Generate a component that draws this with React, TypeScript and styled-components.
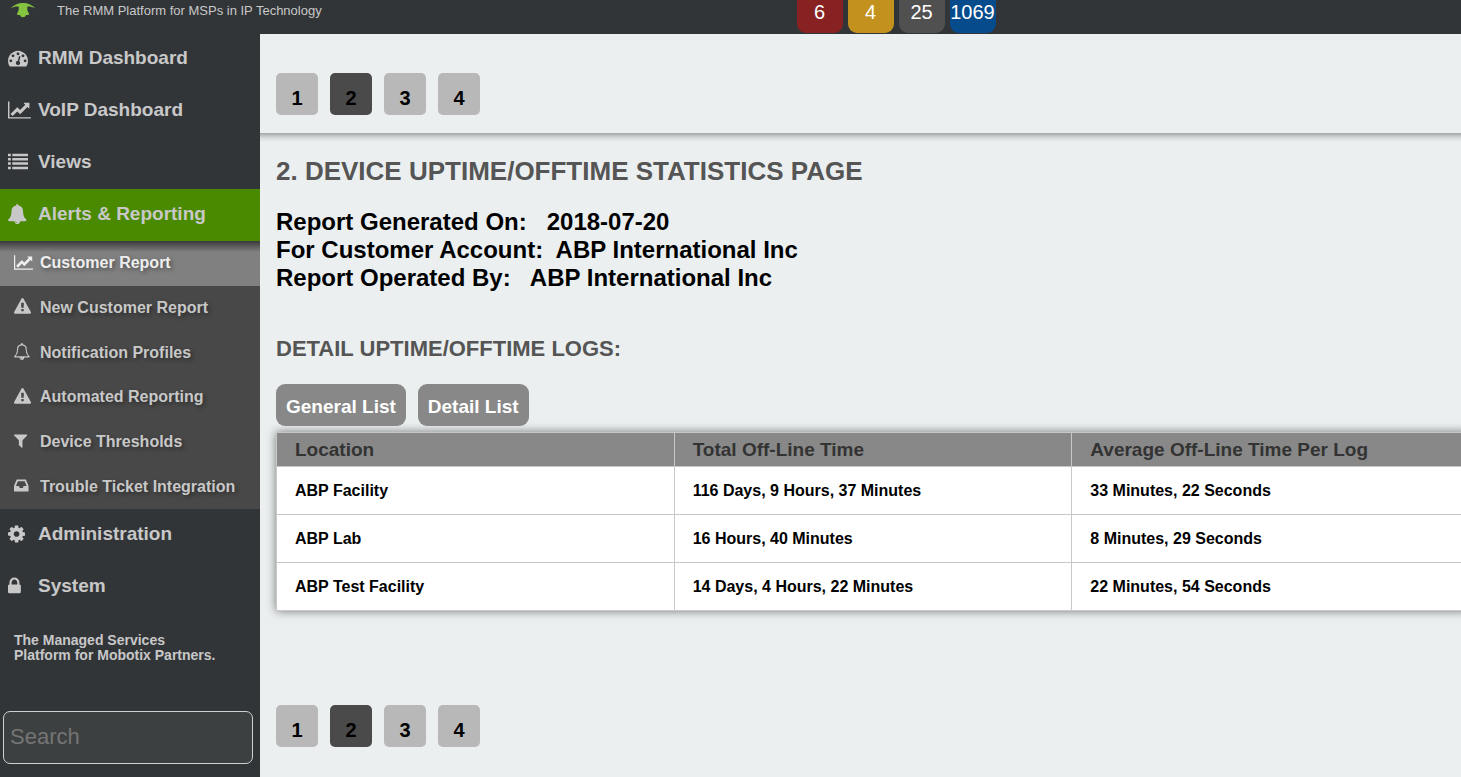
import React from 'react';
import styled, { createGlobalStyle, css } from 'styled-components';

const GlobalStyle = createGlobalStyle`
  * {
    box-sizing: border-box;
  }
  body {
    margin: 0;
    background: #ebeff0;
    font-family: 'Liberation Sans', Arial, sans-serif;
    font-weight: bold;
    color: #000;
  }
  ul {
    list-style: none;
    margin: 0;
    padding: 0;
  }
  button, input {
    font-family: inherit;
  }
`;

/* ---------- icons ---------- */

interface Glyph {
  x: number;
  w: number;
  d: string;
}

const glyphs: Record<string, Glyph> = {
  dashboard: {
    x: 0,
    w: 1792,
    d: 'M384 1152q0-53-37.5-90.5t-90.5-37.5-90.5 37.5-37.5 90.5 37.5 90.5 90.5 37.5 90.5-37.5 37.5-90.5zm192-448q0-53-37.5-90.5t-90.5-37.5-90.5 37.5-37.5 90.5 37.5 90.5 90.5 37.5 90.5-37.5 37.5-90.5zm428 481l101-382q6-26-7.5-48.5t-38.5-29.5-48 6.5-30 39.5l-101 382q-60 5-107 43.5t-63 98.5q-20 77 20 146t117 89 146-20 89-117q16-60-6-117t-72-91zm660-33q0-53-37.5-90.5t-90.5-37.5-90.5 37.5-37.5 90.5 37.5 90.5 90.5 37.5 90.5-37.5 37.5-90.5zm-640-640q0-53-37.5-90.5t-90.5-37.5-90.5 37.5-37.5 90.5 37.5 90.5 90.5 37.5 90.5-37.5 37.5-90.5zm448 192q0-53-37.5-90.5t-90.5-37.5-90.5 37.5-37.5 90.5 37.5 90.5 90.5 37.5 90.5-37.5 37.5-90.5zm320 448q0 261-141 483-19 29-54 29h-1402q-35 0-54-29-141-221-141-483 0-182 71-348t191-286 286-191 348-71 348 71 286 191 191 286 71 348z',
  },
  chart: {
    x: 0,
    w: 2048,
    d: 'M2048 1536v128h-2048v-1536h128v1408h1920zm-128-1248v435q0 21-19.5 29.5t-35.5-7.5l-121-121-633 633q-10 10-23 10t-23-10l-233-233-416 416-192-192 585-585q10-10 23-10t23 10l233 233 464-464-121-121q-16-16-7.5-35.5t29.5-19.5h435q14 0 23 9t9 23z',
  },
  list: {
    x: 0,
    w: 1792,
    d: 'M0 160h256v224h-256zM384 160h1408v224h-1408zM0 544h256v224h-256zM384 544h1408v224h-1408zM0 928h256v224h-256zM384 928h1408v224h-1408zM0 1312h256v224h-256zM384 1312h1408v224h-1408z',
  },
  bell: {
    x: 64,
    w: 1664,
    d: 'M912 1696q0-16-16-16-59 0-101.500-42.500t-42.500-101.500q0-16-16-16t-16 16q0 73 51.500 124.500t124.500 51.500q16 0 16-16zm816-288q0 52-38 90t-90 38h-448q0 106-75 181t-181 75-181-75-75-181h-448q-52 0-90-38t-38-90q50-42 91-88t85-119.500 74.500-158.500 50-206 19.500-260q0-152 117-282.500t307-158.500q-8-19-8-39 0-40 28-68t68-28 68 28 28 68q0 20-8 39 190 28 307 158.500t117 282.500q0 139 19.500 260t50 206 74.500 158.500 85 119.500 91 88z',
  },
  bellOutline: {
    x: 64,
    w: 1664,
    d: 'M912 1696q0-16-16-16-59 0-101.500-42.500t-42.500-101.500q0-16-16-16t-16 16q0 73 51.500 124.500t124.500 51.500q16 0 16-16zm-666-288h1300q-266-300-266-832 0-51-24-105t-69-103-121.500-80.500-169.500-31.500-169.500 31.500-121.500 80.500-69 103-24 105q0 532-266 832zm1482 0q0 52-38 90t-90 38h-448q0 106-75 181t-181 75-181-75-75-181h-448q-52 0-90-38t-38-90q50-42 91-88t85-119.500 74.500-158.500 50-206 19.500-260q0-152 117-282.500t307-158.500q-8-19-8-39 0-40 28-68t68-28 68 28 28 68q0 20-8 39 190 28 307 158.500t117 282.500q0 139 19.500 260t50 206 74.500 158.500 85 119.500 91 88z',
  },
  warning: {
    x: 0,
    w: 1792,
    d: 'M1024 1375v-190q0-14-9.500-23.500t-22.500-9.500h-192q-13 0-22.500 9.500t-9.500 23.500v190q0 14 9.500 23.500t22.500 9.500h192q13 0 22.500-9.500t9.500-23.500zm-2-374l18-459q0-12-10-19-13-11-24-11h-220q-11 0-24 11-10 7-10 21l17 457q0 10 10 16.500t24 6.500h185q14 0 23.500-6.500t10.500-16.500zm-14-934l768 1408q35 63-2 126-17 29-46.500 46t-63.500 17h-1536q-34 0-63.500-17t-46.500-46q-37-63-2-126l768-1408q17-31 47-49t65-18 65 18 47 49z',
  },
  filter: {
    x: 192,
    w: 1408,
    d: 'M1595 295q17 41-14 70l-493 493v742q0 42-39 59-13 5-25 5-27 0-45-19l-256-256q-19-19-19-45v-486l-493-493q-31-29-14-70 17-39 59-39h1280q42 0 59 39z',
  },
  inbox: {
    x: 128,
    w: 1536,
    d: 'M1151 960h316q-1-3-2.500-8.500t-2.500-7.500l-212-496h-708l-212 496q-1 3-2.500 8.500t-2.500 7.500h316l95 192h320zm513 30v482q0 26-19 45t-45 19h-1408q-26 0-45-19t-19-45v-482q0-62 25-123l238-552q10-25 36.500-42t52.500-17h832q26 0 52.500 17t36.500 42l238 552q25 61 25 123z',
  },
  cog: {
    x: 128,
    w: 1536,
    d: 'M1152 896q0-106-75-181t-181-75-181 75-75 181 75 181 181 75 181-75 75-181zm512-109v222q0 12-8 23t-20 13l-185 28q-19 54-39 91 35 50 107 138 10 12 10 25t-9 23q-27 37-99 108t-94 71q-12 0-26-9l-138-108q-44 23-91 38-16 136-29 186-7 28-36 28h-222q-14 0-24.500-8.500t-11.500-21.500l-28-184q-49-16-90-37l-141 107q-10 9-25 9-14 0-25-11-126-114-165-168-7-10-7-23 0-12 8-23 15-21 51-66.500t54-70.500q-27-50-41-99l-183-27q-13-2-21-12.500t-8-23.500v-222q0-12 8-23t19-13l186-28q14-46 39-92-40-57-107-138-10-12-10-24 0-10 9-23 26-36 98.500-107.500t94.500-71.500q13 0 26 10l138 107q44-23 91-38 16-136 29-186 7-28 36-28h222q14 0 24.500 8.500t11.500 21.500l28 184q49 16 90 37l142-107q9-9 24-9 13 0 25 10 129 119 165 170 7 8 7 22 0 12-8 23-15 21-51 66.500t-54 70.500q26 50 41 98l183 28q13 2 21 12.500t8 23.500z',
  },
  lock: {
    x: 320,
    w: 1152,
    d: 'M640 768h512v-192q0-106-75-181t-181-75-181 75-75 181v192zm832 96v576q0 40-28 68t-68 28h-960q-40 0-68-28t-28-68v-576q0-40 28-68t68-28h32v-192q0-184 132-316t316-132 316 132 132 316v192h32q40 0 68 28t28 68z',
  },
};

const IconSlot = styled.span<{ $width: number }>`
  flex: 0 0 ${(p) => p.$width}px;
  display: flex;

  svg {
    display: block;
    fill: currentColor;
  }
`;

function Icon({ name, size, slot }: { name: string; size: number; slot: number }) {
  const g = glyphs[name];
  return (
    <IconSlot $width={slot} aria-hidden="true">
      <svg height={size} width={(g.w / 1792) * size} viewBox={`${g.x} 0 ${g.w} 1792`}>
        <path d={g.d} />
      </svg>
    </IconSlot>
  );
}

/* ---------- header ---------- */

const Page = styled.div`
  min-height: 100vh;
  display: flex;
  flex-direction: column;
  overflow-x: clip;
`;

const Header = styled.header`
  display: flex;
  height: 33px;
  background: #323538;
`;

const Brand = styled.div`
  flex: 0 0 calc(50% + 67px);
  display: flex;
  padding-left: 10px;
  color: #c8c8c8;
`;

const Logo = styled.svg`
  flex: none;
  width: 26px;
  height: 20px;
  margin-right: 21px;
`;

const Tagline = styled.span`
  font-size: 13px;
  font-weight: normal;
  line-height: 21px;
`;

const Badges = styled.div`
  display: flex;
  gap: 5px;
  margin-left: -1px;
`;

const Badge = styled.a<{ $color: string }>`
  display: flex;
  justify-content: center;
  width: 46px;
  height: 33px;
  border-radius: 0 0 9px 9px;
  background: ${(p) => p.$color};
  color: #fff;
  font-size: 20px;
  font-weight: normal;
  line-height: 24px;
  text-decoration: none;
`;

/* ---------- sidebar ---------- */

const Body = styled.div`
  flex: 1;
  display: flex;
`;

const Sidebar = styled.aside`
  flex: 0 0 260px;
  background: #323538;
  color: #c8c8c8;
`;

const NavLink = styled.a<{ $active?: boolean }>`
  display: flex;
  align-items: center;
  height: 52px;
  padding: 0 0 2px 8px;
  background: ${(p) => (p.$active ? '#4a8a00' : 'transparent')};
  color: #c8c8c8;
  font-size: 19px;
  line-height: 24px;
  text-decoration: none;
`;

const SubMenu = styled.ul`
  display: grid;
  grid-auto-rows: 1fr;
  height: 268px;
  background: #484848;
`;

const SubLink = styled.a<{ $active?: boolean }>`
  display: flex;
  align-items: center;
  height: 100%;
  padding-left: 14px;
  color: #c8c8c8;
  font-size: 16px;
  line-height: 20px;
  text-decoration: none;
  text-shadow: 2px 2px 4px rgba(0, 0, 0, 0.4);

  ${IconSlot} {
    padding-bottom: 2px;
  }

  ${(p) =>
    p.$active &&
    css`
      background: linear-gradient(rgba(0, 0, 0, 0.55), transparent 11px), #808080;
      color: #eee;
    `}
`;

const Note = styled.p`
  margin: 20px 14px 48px;
  font-size: 14px;
  line-height: 15px;
`;

const SearchBox = styled.input`
  display: block;
  width: 250px;
  height: 53px;
  margin-left: 3px;
  padding: 0 6px 2px;
  border: 1px solid #d0d0d0;
  border-radius: 7px;
  background: #3d4040;
  color: #c8c8c8;
  font-size: 22px;

  &::placeholder {
    color: #757575;
  }
`;

/* ---------- report ---------- */

const Main = styled.main`
  flex: 1;
  min-width: 0;
  border-top: 1px solid #323538;
`;

const Pager = styled.nav`
  display: flex;
  gap: 12px;
  padding: 39px 16px 18px;
`;

const PageButton = styled.button<{ $active?: boolean }>`
  width: 42px;
  height: 42px;
  padding: 7px 0 0;
  border: 0;
  border-radius: 5px;
  background: ${(p) => (p.$active ? '#4a4a4a' : '#b8b8b8')};
  color: #000;
  font-size: 20px;
  font-weight: bold;
  line-height: 24px;
`;

const Report = styled.section`
  padding: 22px 0 55px 16px;
  background: linear-gradient(rgba(0, 0, 0, 0.3), rgba(0, 0, 0, 0.08) 5px, transparent 9px);
`;

const Title = styled.h1`
  margin: 0 0 21px;
  color: #555;
  font-size: 26px;
  line-height: 32px;
`;

const Facts = styled.p`
  margin: 0 0 43px;
  font-size: 24px;
  line-height: 28px;
  white-space: pre-wrap;
`;

const SubTitle = styled.h2`
  margin: 0 0 21px;
  color: #555;
  font-size: 22px;
  line-height: 28px;
`;

const ListButtons = styled.div`
  display: flex;
  gap: 12px;
  margin-bottom: 6px;
`;

const ListButton = styled.button`
  height: 42px;
  padding: 4px 10px 0;
  border: 0;
  border-radius: 9px;
  background: #888;
  color: #fff;
  font-size: 19px;
  font-weight: bold;
`;

const LogTable = styled.table`
  width: calc(100% + 9px);
  table-layout: fixed;
  border-collapse: collapse;
  background: #fff;
  box-shadow: 0 0 9px rgba(0, 0, 0, 0.5);

  th, td {
    border: 1px solid #c8c8c8;
    padding: 0 18px;
    text-align: left;
  }
  th {
    height: 34px;
    background: #888;
    color: #333;
    font-size: 19px;
  }
  td {
    height: 48px;
    font-size: 16px;
  }
`;

/* ---------- data ---------- */

const subItems = [
  ['chart', 'Customer Report'],
  ['warning', 'New Customer Report'],
  ['bellOutline', 'Notification Profiles'],
  ['warning', 'Automated Reporting'],
  ['filter', 'Device Thresholds'],
  ['inbox', 'Trouble Ticket Integration'],
];

const badges = [
  ['6', '#882222'],
  ['4', '#c3921e'],
  ['25', '#505050'],
  ['1069', '#064c8c'],
];

const rows = [
  ['ABP Facility', '116 Days, 9 Hours, 37 Minutes', '33 Minutes, 22 Seconds'],
  ['ABP Lab', '16 Hours, 40 Minutes', '8 Minutes, 29 Seconds'],
  ['ABP Test Facility', '14 Days, 4 Hours, 22 Minutes', '22 Minutes, 54 Seconds'],
];

function NavItem({ icon, label, active, children }: { icon: string; label: string; active?: boolean; children?: React.ReactNode }) {
  return (
    <li>
      <NavLink href="#" $active={active}>
        <Icon name={icon} size={20} slot={30} />
        {label}
      </NavLink>
      {children}
    </li>
  );
}

function PageNav({ label }: { label: string }) {
  return (
    <Pager aria-label={label}>
      {[1, 2, 3, 4].map((n) => (
        <PageButton key={n} type="button" $active={n === 2}>
          {n}
        </PageButton>
      ))}
    </Pager>
  );
}

export default function App() {
  return (
    <Page>
      <GlobalStyle />
      <Header>
        <Brand>
          <Logo viewBox="0 0 26 20" aria-hidden="true">
            <path
              fill="#84c440"
              d="M0.500 8.500C3.500 5 8 3 13 3s9.500 2 12.500 5.500C22.500 7 20 6.400 17.200 6.600C17.200 10 17.500 12 18.800 13V15H16C15.500 16.500 14.500 17.200 13 17.200S10.500 16.500 10 15H7.200V13C8.500 12 8.800 10 8.800 6.600C6 6.400 3.500 7 .5 8.500z"
            />
          </Logo>
          <Tagline>The RMM Platform for MSPs in IP Technology</Tagline>
        </Brand>
        <Badges>
          {badges.map(([count, color]) => (
            <Badge key={count} href="#" $color={color}>
              {count}
            </Badge>
          ))}
        </Badges>
      </Header>
      <Body>
        <Sidebar>
          <nav aria-label="Main">
            <ul>
              <NavItem icon="dashboard" label="RMM Dashboard" />
              <NavItem icon="chart" label="VoIP Dashboard" />
              <NavItem icon="list" label="Views" />
              <NavItem icon="bell" label="Alerts &amp; Reporting" active>
                <SubMenu>
                  {subItems.map(([icon, label], i) => (
                    <li key={label}>
                      <SubLink href="#" $active={i === 0}>
                        <Icon name={icon} size={17} slot={26} />
                        {label}
                      </SubLink>
                    </li>
                  ))}
                </SubMenu>
              </NavItem>
              <NavItem icon="cog" label="Administration" />
              <NavItem icon="lock" label="System" />
            </ul>
          </nav>
          <Note>
            The Managed Services
            <br />
            Platform for Mobotix Partners.
          </Note>
          <SearchBox type="search" placeholder="Search" aria-label="Search" />
        </Sidebar>
        <Main>
          <PageNav label="Report pages, top" />
          <Report>
            <Title>2. DEVICE UPTIME/OFFTIME STATISTICS PAGE</Title>
            <Facts>
              {'Report Generated On:   2018-07-20\nFor Customer Account:  ABP International Inc\nReport Operated By:   ABP International Inc'}
            </Facts>
            <SubTitle>DETAIL UPTIME/OFFTIME LOGS:</SubTitle>
            <ListButtons>
              <ListButton type="button">General List</ListButton>
              <ListButton type="button">Detail List</ListButton>
            </ListButtons>
            <LogTable>
              <thead>
                <tr>
                  <th>Location</th>
                  <th>Total Off-Line Time</th>
                  <th>Average Off-Line Time Per Log</th>
                </tr>
              </thead>
              <tbody>
                {rows.map((row) => (
                  <tr key={row[0]}>
                    {row.map((cell) => (
                      <td key={cell}>{cell}</td>
                    ))}
                  </tr>
                ))}
              </tbody>
            </LogTable>
          </Report>
          <PageNav label="Report pages, bottom" />
        </Main>
      </Body>
    </Page>
  );
}
